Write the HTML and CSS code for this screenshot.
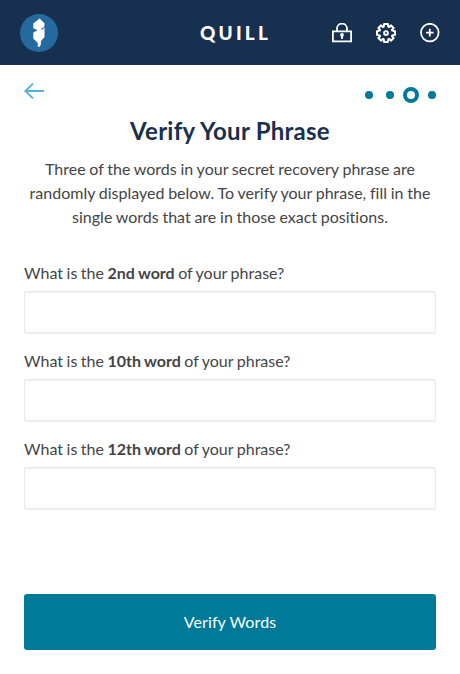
FILE: index.html
```
<!DOCTYPE html>
<html lang="en">
<head>
<meta charset="utf-8">
<title>Quill</title>
<link rel="stylesheet" href="styles.css">
</head>
<body>
<header class="header">
  <svg class="logo" width="38" height="38" viewBox="0 0 38 38">
    <circle cx="19" cy="19" r="19" fill="#256a9f"/>
    <path d="M19.6 4.6 24.4 9.2v3.2l-3.6 2.9 1.3.5 2.4-2.2v9.4l-3.6 4.2v3.1l-1.1 2.5h-2v-3.9l-4.5-4.3v-6l4.2-2.4-4.2-2V9.4z" fill="#fff"/>
  </svg>
  <div class="brand">QUILL</div>
  <nav class="actions">
    <svg width="20" height="20" viewBox="0 0 20 20" fill="none" stroke="#fff" stroke-width="1.8">
      <path d="M.9 8.4h18.2v9.9H.9zM5 8.4V5.6a5 5 0 0 1 10 0v2.8"/>
      <circle cx="10" cy="12" r="1.9" fill="#fff" stroke="none"/>
      <path d="M10 12v4"/>
    </svg>
    <svg width="20" height="20" viewBox="-10 -10 20 20" fill="none" stroke="#fff" stroke-width="2.1" stroke-linejoin="round">
      <path d="M-1.8-9H1.8L2.4-6.3 3.1-6 5.1-7.6 7.6-5.1 6-3.1 6.3-2.4 9-1.8V1.8L6.3 2.4 6 3.1 7.6 5.1 5.1 7.6 3.1 6 2.4 6.3 1.8 9H-1.8L-2.4 6.3-3.1 6-5.1 7.6-7.6 5.1-6 3.1-6.3 2.4-9 1.8V-1.8L-6.3-2.4-6-3.1-7.6-5.1-5.1-7.6-3.1-6-2.4-6.3z"/>
      <circle r="1.9" stroke-width="1.9"/>
    </svg>
    <svg width="20" height="20" viewBox="0 0 20 20" fill="none" stroke="#fff" stroke-width="1.8">
      <circle cx="9.8" cy="9.6" r="8.8"/>
      <path d="M6 9.6h7.6M9.8 5.8v7.6"/>
    </svg>
  </nav>
</header>
<main class="content">
  <div class="progress">
    <svg class="back" width="20" height="16" viewBox="0 0 20 16" fill="none" stroke="#51b2e0" stroke-width="1.9">
      <path d="M20 8H1.3M9 .6 1.3 8 9 15.4"/>
    </svg>
    <div class="steps">
      <span class="step"></span>
      <span class="step"></span>
      <span class="step current"></span>
      <span class="step"></span>
    </div>
  </div>
  <h1 class="title">Verify Your Phrase</h1>
  <p class="intro">Three of the words in your secret recovery phrase are randomly displayed below. To verify your phrase, fill in the single words that are in those exact positions.</p>
  <form class="form">
    <label class="field"><span>What is the <b>2nd word</b> of your phrase?</span><input class="input" type="text"></label>
    <label class="field"><span>What is the <b>10th word</b> of your phrase?</span><input class="input" type="text"></label>
    <label class="field"><span>What is the <b>12th word</b> of your phrase?</span><input class="input" type="text"></label>
    <button class="submit" type="button">Verify Words</button>
  </form>
</main>
</body>
</html>
```
FILE: styles.css
```
* { box-sizing: border-box; }
body {
  margin: 0;
  height: 674px;
  display: flex;
  flex-direction: column;
  background: #fff;
  color: #444;
  font: 16px/24px Lato, sans-serif;
}
svg { display: block; }
.header {
  height: 65px;
  flex: none;
  display: grid;
  grid-template-columns: 1fr auto 1fr;
  align-items: center;
  padding: 0 20px;
  background: #17304f;
}
.brand {
  padding-left: 11px;
  color: #fff;
  font-size: 19px;
  font-weight: 900;
  letter-spacing: 3.2px;
}
.actions {
  display: flex;
  justify-content: flex-end;
  gap: 24px;
}
.content {
  flex: 1;
  display: flex;
  flex-direction: column;
  padding: 18px 24px 24px;
}
.progress {
  display: flex;
  justify-content: space-between;
  align-items: flex-start;
  height: 32px;
}
.steps {
  display: flex;
  align-items: center;
  padding-top: 4px;
}
.step {
  width: 8px;
  height: 8px;
  margin-left: 13px;
  border-radius: 50%;
  background: #007a98;
}
.step.current {
  width: 16px;
  height: 16px;
  margin: 0 -4px 0 9px;
  border: 4px solid #007a98;
  background: #fff;
}
.title {
  margin: 0;
  color: #192f50;
  font-size: 24px;
  line-height: 32px;
  font-weight: 700;
  letter-spacing: 0.25px;
  text-align: center;
}
.intro {
  margin: 10px 0 32px;
  word-spacing: -0.35px;
  font-variant-ligatures: none;
  text-align: center;
}
.form {
  flex: 1;
  display: flex;
  flex-direction: column;
}
.field {
  display: flex;
  flex-direction: column;
  gap: 6px;
  margin-bottom: 16px;
  word-spacing: -0.55px;
}
.input {
  width: 100%;
  height: 42px;
  padding: 0 12px;
  border: 1px solid #e8e8ed;
  border-radius: 2px;
  box-shadow: 0 1px 1px #eeeef2, inset 0 1px 2px #f2f2f4;
  font: inherit;
}
.submit {
  height: 56px;
  margin-top: auto;
  border: 0;
  border-radius: 3px;
  background: #007a98;
  color: #fff;
  font: inherit;
  letter-spacing: 0.12px;
}
```
